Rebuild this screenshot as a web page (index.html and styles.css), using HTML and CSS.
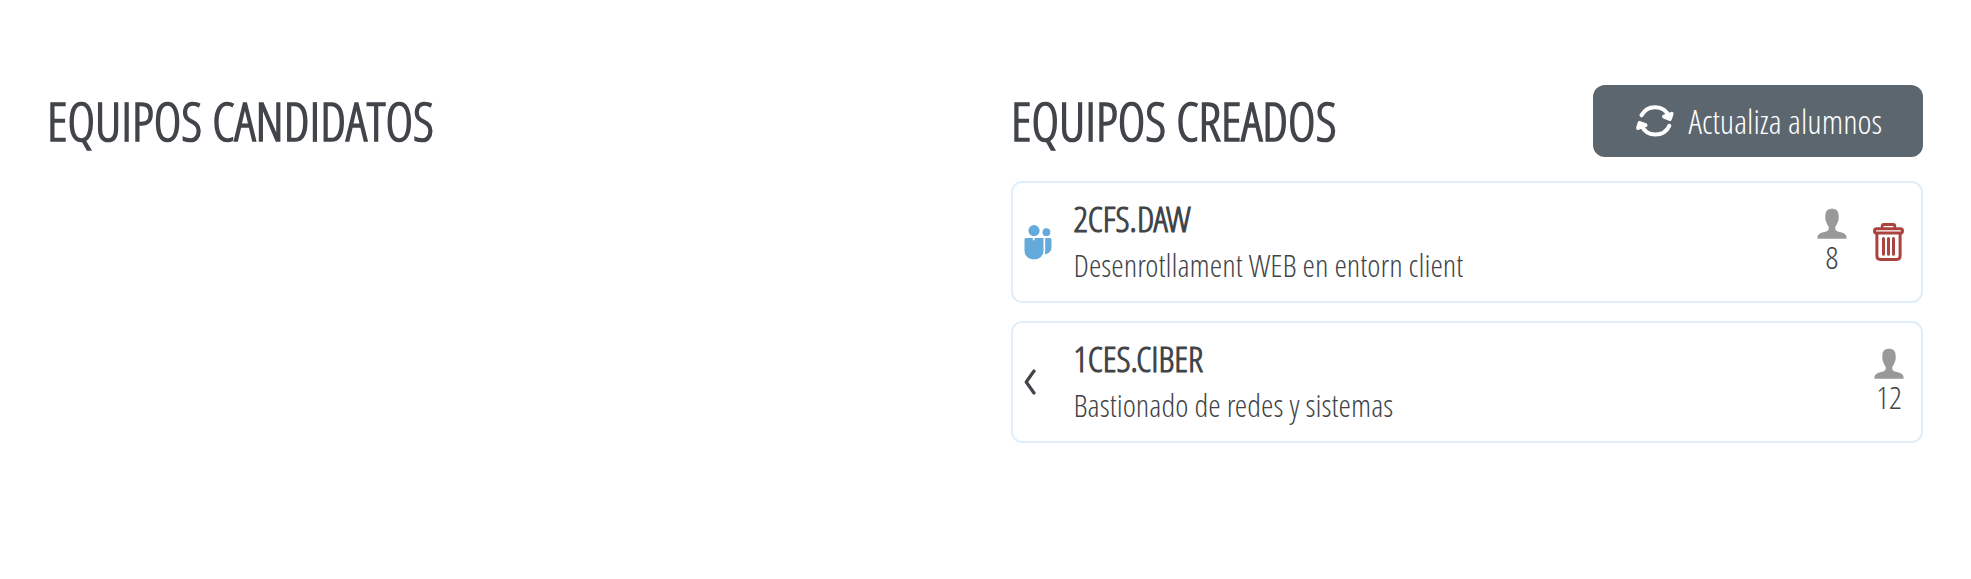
FILE: index.html
```html
<!DOCTYPE html>
<html lang="es">
<head>
<meta charset="utf-8">
<title>Equipos</title>
<link rel="stylesheet" href="styles.css">
</head>
<body>
<main class="board">
  <section class="column">
    <header class="column-head"><h2>EQUIPOS CANDIDATOS</h2></header>
  </section>
  <section class="column">
    <header class="column-head">
      <h2>EQUIPOS CREADOS</h2>
      <button class="refresh" type="button">
        <svg width="40" height="36" viewBox="0 0 40 36" fill="none" stroke="#fff" stroke-width="4" stroke-linecap="round" stroke-linejoin="round">
          <path d="M6.5 12.3A15.3 15.3 0 0 1 34 13.2"/>
          <path d="M34.3 22.8A15.3 15.3 0 0 1 6.6 22.6"/>
          <path d="M29 13.6L36.6 10.8L34.8 16Z" fill="#fff"/>
          <path d="M3.1 25L4.6 20L10.5 22.2Z" fill="#fff"/>
        </svg>
        <span>Actualiza alumnos</span>
      </button>
    </header>
    <article class="team">
      <div class="state">
        <svg width="28" height="36" viewBox="0 0 28 36" fill="#64abdb">
          <circle cx="10" cy="6.6" r="5.6"/><circle cx="22.4" cy="8.2" r="3.9"/>
          <path d="M2 14H8.8V16.2H10.6V14H19.5V26.5Q19.5 32.5 14 34.7Q10 36 6 34.7Q.5 32.5 .5 26.5V15.5Q.5 14 2 14Z"/>
          <path d="M21.2 14H26Q27.5 14 27.5 15.5V23Q27.5 29.3 20.5 30.5Q21.2 29 21.2 26.5Z"/>
        </svg>
      </div>
      <div class="info">
        <h3>2CFS.DAW</h3>
        <p>Desenrotllament WEB en entorn client</p>
      </div>
      <div class="count">
        <svg width="30" height="31" viewBox="0 0 30 31" fill="#999"><path d="M15 .7C11 .7 8.4 2.8 8.5 6.8L8.2 9.2Q8.2 12 9.4 14.6Q10.4 17.3 11.7 18.8V21.4Q10.5 23.4 7.2 24.1Q1.2 25.5 .5 28.5V30.7H29.5V28.5Q28.8 25.5 22.8 24.1Q19.5 23.4 18.3 21.4V18.8Q19.6 17.3 20.6 14.6Q21.8 12 21.8 9.2L21.5 6.8C21.6 2.8 19 .7 15 .7Z"/></svg>
        <span>8</span>
      </div>
      <button class="delete" type="button" aria-label="Eliminar">
        <svg width="31" height="38" viewBox="0 0 31 38" fill="none" stroke="#ab433f" stroke-linecap="round" stroke-linejoin="round">
          <path stroke-width="2.8" d="M9.2 4.4V3Q9.2 1.5 10.7 1.5H20.3Q21.8 1.5 21.8 3V4.4"/>
          <rect x="1.5" y="5.8" width="28" height="4.2" rx="2.1" stroke-width="3"/>
          <path stroke-width="3" d="M3.9 11V33Q3.9 36.4 7.3 36.4H23.7Q27.1 36.4 27.1 33V11"/>
          <path stroke-width="3" d="M10.5 15.5V31.2M15.5 15.5V31.2M20.5 15.5V31.2"/>
        </svg>
      </button>
    </article>
    <article class="team">
      <div class="state">
        <svg width="12" height="26" viewBox="0 0 12 26" fill="none" stroke="#414549" stroke-width="3.2" stroke-linecap="round" stroke-linejoin="round"><path d="M10 2L2.2 13L10 24"/></svg>
      </div>
      <div class="info">
        <h3>1CES.CIBER</h3>
        <p>Bastionado de redes y sistemas</p>
      </div>
      <div class="count">
        <svg width="30" height="31" viewBox="0 0 30 31" fill="#999"><path d="M15 .7C11 .7 8.4 2.8 8.5 6.8L8.2 9.2Q8.2 12 9.4 14.6Q10.4 17.3 11.7 18.8V21.4Q10.5 23.4 7.2 24.1Q1.2 25.5 .5 28.5V30.7H29.5V28.5Q28.8 25.5 22.8 24.1Q19.5 23.4 18.3 21.4V18.8Q19.6 17.3 20.6 14.6Q21.8 12 21.8 9.2L21.5 6.8C21.6 2.8 19 .7 15 .7Z"/></svg>
        <span>12</span>
      </div>
    </article>
  </section>
</main>
</body>
</html>
```
FILE: styles.css
```css
* { box-sizing: border-box; }
body {
  margin: 0;
  background: #fff;
  color: #414549;
  font-family: "Open Sans Condensed Light", "Open Sans", sans-serif;
  font-weight: 300;
}
svg { flex: none; }
h2, h3, p { margin: 0; white-space: nowrap; }
.board {
  display: grid;
  grid-template-columns: 912px 912px;
  column-gap: 52px;
  padding: 85px 48px 0 47px;
}
.column { display: flex; flex-direction: column; gap: 18px; }
.column-head {
  display: flex;
  justify-content: space-between;
  align-items: center;
  height: 78px;
  padding-bottom: 6px;
}
h2 { font-size: 53px; line-height: 72px; font-weight: 700; font-kerning: none; }
.refresh {
  display: flex;
  align-items: center;
  gap: 13.5px;
  width: 330px;
  height: 72px;
  padding: 0 0 0 42px;
  border: 0;
  border-radius: 12px;
  background: #5c666f;
  color: #fff;
  font: inherit;
  font-size: 33.8px;
  white-space: nowrap;
}
.team {
  display: flex;
  align-items: center;
  height: 122px;
  padding: 0 17px 0 11px;
  border: 2px solid #dfeefa;
  border-radius: 11px;
}
.state { display: flex; width: 49.5px; }
.info { flex: 1; }
h3 { font-size: 35.7px; line-height: 45px; font-weight: 700; }
p { font-size: 31.75px; line-height: 47px; }
.count {
  display: flex;
  flex-direction: column;
  align-items: center;
  width: 30px;
  font-size: 32px;
  line-height: 36px;
  padding-bottom: 2px;
}
.delete {
  display: flex;
  margin-left: 26px;
  padding: 0;
  border: 0;
  background: none;
}
```
